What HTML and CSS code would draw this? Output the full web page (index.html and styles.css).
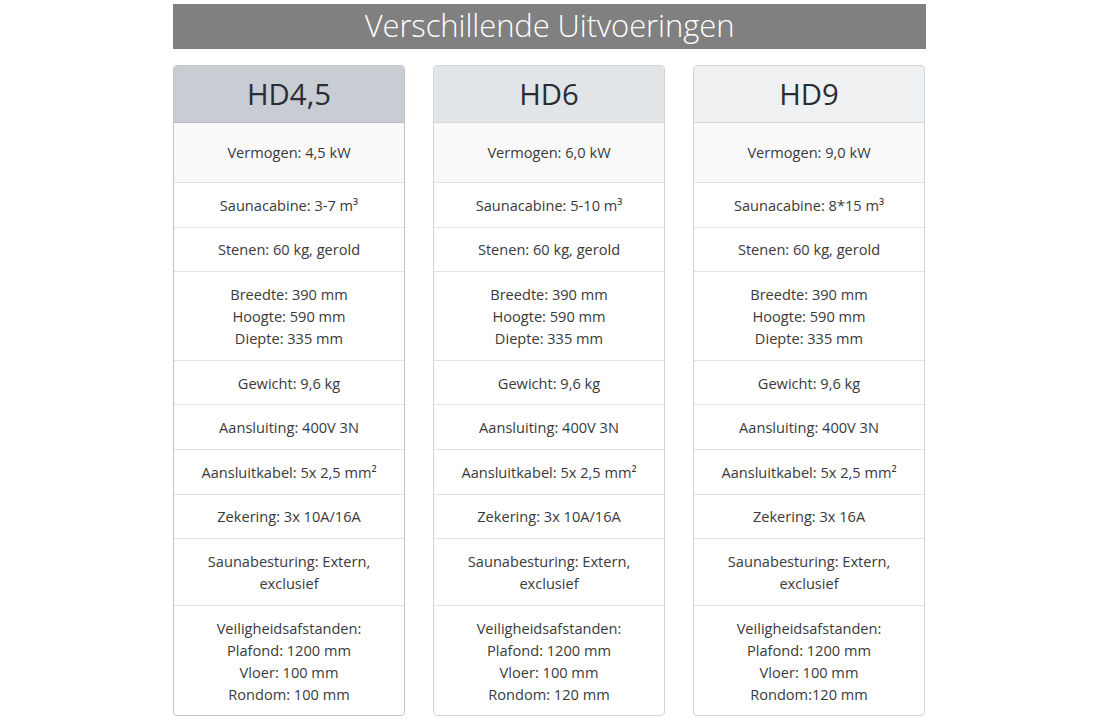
FILE: index.html
```html
<!DOCTYPE html>
<html lang="nl">
<head>
<meta charset="utf-8">
<title>Verschillende Uitvoeringen</title>
<link rel="stylesheet" href="styles.css">
</head>
<body>
<div class="wrap">
  <h1 class="banner">Verschillende Uitvoeringen</h1>
  <div class="cards">
    <div class="card card-a">
      <div class="card-head">HD4,5</div>
      <ul class="rows">
        <li class="first">Vermogen: 4,5 kW</li>
        <li>Saunacabine: 3-7 m³</li>
        <li>Stenen: 60 kg, gerold</li>
        <li>Breedte: 390 mm<br>Hoogte: 590 mm<br>Diepte: 335 mm</li>
        <li>Gewicht: 9,6 kg</li>
        <li>Aansluiting: 400V 3N</li>
        <li>Aansluitkabel: 5x 2,5 mm²</li>
        <li>Zekering: 3x 10A/16A</li>
        <li>Saunabesturing: Extern,<br>exclusief</li>
        <li>Veiligheidsafstanden:<br>Plafond: 1200 mm<br>Vloer: 100 mm<br>Rondom: 100 mm</li>
      </ul>
    </div>
    <div class="card card-b">
      <div class="card-head">HD6</div>
      <ul class="rows">
        <li class="first">Vermogen: 6,0 kW</li>
        <li>Saunacabine: 5-10 m³</li>
        <li>Stenen: 60 kg, gerold</li>
        <li>Breedte: 390 mm<br>Hoogte: 590 mm<br>Diepte: 335 mm</li>
        <li>Gewicht: 9,6 kg</li>
        <li>Aansluiting: 400V 3N</li>
        <li>Aansluitkabel: 5x 2,5 mm²</li>
        <li>Zekering: 3x 10A/16A</li>
        <li>Saunabesturing: Extern,<br>exclusief</li>
        <li>Veiligheidsafstanden:<br>Plafond: 1200 mm<br>Vloer: 100 mm<br>Rondom: 120 mm</li>
      </ul>
    </div>
    <div class="card card-c">
      <div class="card-head">HD9</div>
      <ul class="rows">
        <li class="first">Vermogen: 9,0 kW</li>
        <li>Saunacabine: 8*15 m³</li>
        <li>Stenen: 60 kg, gerold</li>
        <li>Breedte: 390 mm<br>Hoogte: 590 mm<br>Diepte: 335 mm</li>
        <li>Gewicht: 9,6 kg</li>
        <li>Aansluiting: 400V 3N</li>
        <li>Aansluitkabel: 5x 2,5 mm²</li>
        <li>Zekering: 3x 16A</li>
        <li>Saunabesturing: Extern,<br>exclusief</li>
        <li>Veiligheidsafstanden:<br>Plafond: 1200 mm<br>Vloer: 100 mm<br>Rondom:120 mm</li>
      </ul>
    </div>
  </div>
</div>
</body>
</html>
```
FILE: styles.css
```css
* { box-sizing: border-box; }
html, body { margin: 0; padding: 0; background: #fff; }
body {
  font-family: "Open Sans", "Liberation Sans", sans-serif;
  color: #3a3a3a;
}
.wrap {
  width: 753px;
  margin-left: 173px;
  padding-top: 4px;
}
.banner {
  margin: 0;
  height: 45px;
  background: #808080;
  color: #fff;
  font-weight: 300;
  font-size: 31px;
  line-height: 43px;
  text-align: center;
  letter-spacing: -0.1px;
}
.cards {
  display: grid;
  grid-template-columns: 232px 232px 232px;
  column-gap: 28px;
  margin-top: 16px;
}
.card {
  border: 1px solid #d4d4d4;
  border-radius: 4px;
  overflow: hidden;
  background: #fff;
}
.card-a { border-color: #c4c4c4; }
.card-head {
  height: 57px;
  line-height: 56px;
  text-align: center;
  font-size: 29.3px;
  color: #2a2e33;
  border-bottom: 1px solid #d6d6d6;
}
.card-a .card-head { background: #c8cdd4; border-bottom-color: #b9bec5; }
.card-b .card-head { background: #e2e5e8; }
.card-c .card-head { background: #eef0f2; }
.rows {
  list-style: none;
  margin: 0;
  padding: 0;
}
.rows li {
  font-size: 14.6px;
  line-height: 22px;
  padding: 10.8px 8px;
  text-align: center;
  border-top: 1px solid #e2e2e2;
}
.rows li:first-child { border-top: 0; }
.rows li.first {
  background: #f9f9f9;
  padding-top: 18px;
  padding-bottom: 19px;
}
```
